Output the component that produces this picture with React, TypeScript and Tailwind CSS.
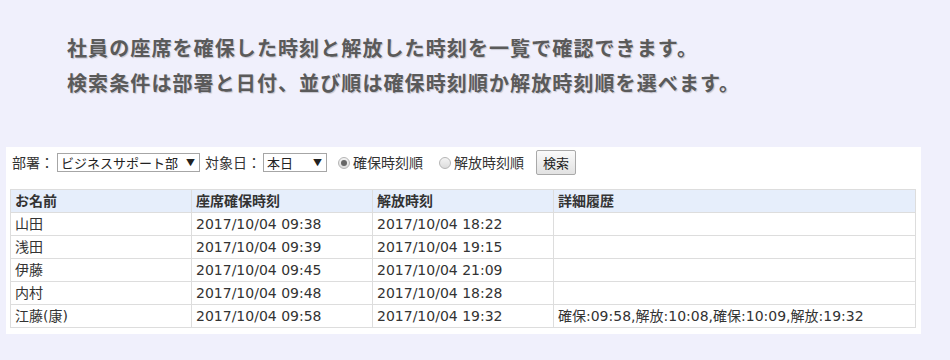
const rows = [
  { name: "山田", start: "2017/10/04 09:38", end: "2017/10/04 18:22", log: "" },
  { name: "浅田", start: "2017/10/04 09:39", end: "2017/10/04 19:15", log: "" },
  { name: "伊藤", start: "2017/10/04 09:45", end: "2017/10/04 21:09", log: "" },
  { name: "内村", start: "2017/10/04 09:48", end: "2017/10/04 18:28", log: "" },
  { name: "江藤(康)", start: "2017/10/04 09:58", end: "2017/10/04 19:32", log: "確保:09:58,解放:10:08,確保:10:09,解放:19:32" },
];

function FakeSelect({ value, width }: { value: string; width: string }) {
  return (
    <div className={`flex h-[19px] items-center justify-between border border-[#a6a6a6] bg-white pl-[3px] pr-[4px] font-['Noto_Sans_CJK_JP',sans-serif] text-[13px] text-[#222] ${width}`}>
      <span className="whitespace-nowrap">{value}</span>
      <span className="text-[9px] text-[#222]">▼</span>
    </div>
  );
}

function Radio({ checked, label }: { checked?: boolean; label: string }) {
  return (
    <label className="flex items-center gap-[3px] text-[14px] text-[#333]">
      <span className="flex h-[12px] w-[12px] items-center justify-center rounded-full border border-[#b5b5b5] bg-gradient-to-b from-[#f4f4f4] to-[#dcdcdc]">
        {checked && <span className="h-[6px] w-[6px] rounded-full bg-[#666]" />}
      </span>
      {label}
    </label>
  );
}

export default function App() {
  const font = "font-['DejaVu_Sans','Noto_Sans_CJK_JP',sans-serif]";
  return (
    <div className={`h-[360px] w-full overflow-hidden bg-[#f0f0fc] ${font}`}>
      {/* intro */}
      <div className="pl-[67px] pt-[30px] font-['Noto_Sans_CJK_JP',sans-serif] text-[20px] font-semibold leading-[35px] tracking-[1.1px] text-[#5a5a5a] [text-shadow:1px_1px_1px_rgba(0,0,0,0.18)]">
        <p>社員の座席を確保した時刻と解放した時刻を一覧で確認できます。</p>
        <p>検索条件は部署と日付、並び順は確保時刻順か解放時刻順を選べます。</p>
      </div>

      {/* panel */}
      <div className="ml-[6px] mt-[47px] w-[915px] bg-white pb-[6px] pl-[4px] pr-[6px] pt-[3px]">
        <div className="flex h-[25px] items-center pl-[2px] font-['Noto_Sans_CJK_JP',sans-serif] text-[14px] text-[#333]">
          <span className="mr-[3px]">部署：</span>
          <FakeSelect value="ビジネスサポート部" width="w-[143px]" />
          <span className="ml-[5px] mr-[2px]">対象日：</span>
          <FakeSelect value="本日" width="w-[64px]" />
          <div className="ml-[11px]">
            <Radio checked label="確保時刻順" />
          </div>
          <div className="ml-[16px]">
            <Radio label="解放時刻順" />
          </div>
          <button className="ml-[12px] h-[25px] w-[40px] rounded-[2px] border border-[#a9a9a9] bg-gradient-to-b from-[#fafafa] to-[#e2e2e2] text-[13px] text-[#222]">
            検索
          </button>
        </div>

        <table className="mt-[14px] w-[905px] table-fixed border-collapse text-[14px] text-[#333]">
          <colgroup>
            <col className="w-[181px]" />
            <col className="w-[181px]" />
            <col className="w-[181px]" />
            <col className="w-[362px]" />
          </colgroup>
          <thead>
            <tr className="h-[23px] bg-[#e6eefb]">
              {["お名前", "座席確保時刻", "解放時刻", "詳細履歴"].map(h => (
                <th key={h} className="border border-[#dddddd] px-[4px] text-left font-bold">{h}</th>
              ))}
            </tr>
          </thead>
          <tbody>
            {rows.map(r => (
              <tr key={r.name} className="h-[23px]">
                <td className="border border-[#dddddd] px-[4px]">{r.name}</td>
                <td className="border border-[#dddddd] px-[4px]">{r.start}</td>
                <td className="border border-[#dddddd] px-[4px]">{r.end}</td>
                <td className="whitespace-nowrap border border-[#dddddd] px-[4px]">{r.log}</td>
              </tr>
            ))}
          </tbody>
        </table>
      </div>
    </div>
  );
}
